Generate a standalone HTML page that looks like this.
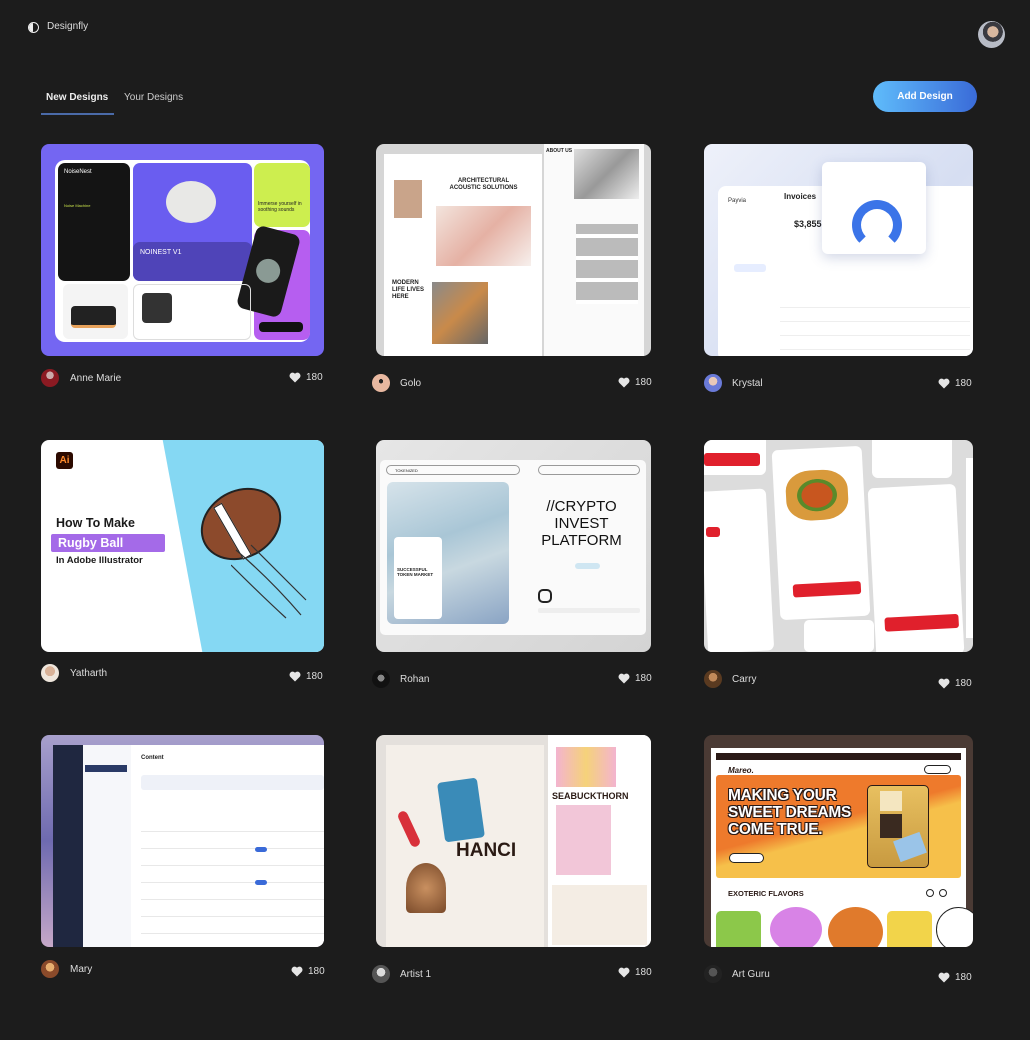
<!DOCTYPE html>
<html><head><meta charset="utf-8">
<style>
*{margin:0;padding:0;box-sizing:border-box}
body{width:1030px;height:1040px;background:#1c1c1c;font-family:"Liberation Sans",sans-serif;color:#e8e8e8;position:relative;overflow:hidden}
.a{position:absolute}
.card{position:absolute;border-radius:8px;overflow:hidden}
.av{position:absolute;width:18px;height:18px;border-radius:50%}
.nm{position:absolute;font-size:10px;color:#ddd}
.lk{position:absolute;font-size:10px;color:#ddd;display:flex;align-items:center;gap:5px}
.lk svg{width:12px;height:11px}
</style></head><body>
<!-- header -->
<div class="a" style="left:28px;top:22px;width:11px;height:11px;border-radius:50%;border:1.5px solid #eee;overflow:hidden"><div style="width:4px;height:11px;background:#eee"></div></div>
<div class="a" style="left:47px;top:21px;font-size:10px;color:#ddd">Designfly</div>
<div class="a" style="left:978px;top:21px;width:27px;height:27px;border-radius:50%;background:radial-gradient(circle at 55% 40%,#d9b8a0 0 25%,#3a3a40 26% 45%,#b8bcc6 46%)"></div>
<div class="a" style="left:46px;top:92px;font-size:10px;font-weight:bold;color:#eee">New Designs</div>
<div class="a" style="left:124px;top:92px;font-size:10px;color:#ccc">Your Designs</div>
<div class="a" style="left:41px;top:113px;width:73px;height:1.5px;background:#4a6aa8"></div>
<div class="a" style="left:873px;top:81px;width:104px;height:31px;border-radius:16px;background:linear-gradient(90deg,#5fbcfb,#3a6bd8);color:#fff;font-size:10px;font-weight:bold;display:flex;align-items:center;justify-content:center">Add Design</div>

<!-- card1 -->
<div class="card" style="left:41px;top:144px;width:283px;height:212px;background:#7466f2">
 <div class="a" style="left:14px;top:16px;width:255px;height:182px;background:#fff;border-radius:10px"></div>
 <div class="a" style="left:17px;top:19px;width:72px;height:118px;background:#141414;border-radius:7px;color:#fff;font-size:6px;padding:6px">NoiseNest<div style="color:#c7e04a;margin-top:28px;font-size:4px">Noise Machine</div></div>
 <div class="a" style="left:92px;top:19px;width:119px;height:118px;background:#6a5df0;border-radius:7px"><div class="a" style="left:33px;top:18px;width:50px;height:42px;border-radius:50%;background:#e8e8e6"></div><div class="a" style="left:0;top:79px;width:119px;height:39px;background:#4f44b8;border-radius:7px;color:#fff;font-size:7px;padding:7px">NOINEST V1</div></div>
 <div class="a" style="left:213px;top:19px;width:56px;height:64px;background:#cdee4f;border-radius:7px;font-size:5px;color:#222;padding:38px 4px 0">Immerse yourself in soothing sounds</div>
 <div class="a" style="left:213px;top:86px;width:56px;height:110px;background:#b65ef0;border-radius:7px"></div>
 <div class="a" style="left:205px;top:85px;width:45px;height:85px;background:#1a1a1a;border-radius:8px;transform:rotate(15deg)"><div class="a" style="left:10px;top:30px;width:24px;height:24px;border-radius:50%;background:#8a9a94"></div></div>
 <div class="a" style="left:22px;top:140px;width:65px;height:55px;background:#f4f4f4;border-radius:6px"><div class="a" style="left:8px;top:22px;width:45px;height:22px;background:#222;border-radius:4px;border-bottom:3px solid #e7a25b"></div></div>
 <div class="a" style="left:92px;top:140px;width:118px;height:56px;border:1px solid #ddd;border-radius:6px"><div class="a" style="left:8px;top:8px;width:30px;height:30px;background:#333;border-radius:4px"></div></div>
 <div class="a" style="left:218px;top:178px;width:44px;height:10px;background:#111;border-radius:4px"></div>
</div>
<div class="av" style="left:41px;top:369px;background:radial-gradient(circle at 50% 35%,#caa 0 25%,#8b1a22 26%)"></div>
<div class="nm" style="left:70px;top:373px">Anne Marie</div>
<div class="lk" style="left:289px;top:372px"><svg viewBox="0 0 24 22"><path d="M12 21 2.5 11.5A6 6 0 0 1 12 3.5a6 6 0 0 1 9.5 8Z" fill="#e5e5e5"/></svg>180</div>

<!-- card2 -->
<div class="card" style="left:376px;top:144px;width:275px;height:212px;background:#d6d6d6">
 <div class="a" style="left:8px;top:10px;width:158px;height:202px;background:#fff"></div>
 <div class="a" style="left:18px;top:36px;width:28px;height:38px;background:#c9a48a"></div>
 <div class="a" style="left:70px;top:34px;width:75px;font-size:6px;font-weight:bold;color:#222;text-align:center;line-height:7px">ARCHITECTURAL ACOUSTIC SOLUTIONS</div>
 <div class="a" style="left:60px;top:62px;width:95px;height:60px;background:linear-gradient(135deg,#f3e4dd,#e5b1a4,#f7f0ed)"></div>
 <div class="a" style="left:16px;top:136px;font-size:6px;font-weight:bold;color:#222;line-height:7px">MODERN<br>LIFE LIVES<br>HERE</div>
 <div class="a" style="left:56px;top:138px;width:56px;height:62px;background:linear-gradient(135deg,#8a8a8a,#c98a4a,#666)"></div>
 <div class="a" style="left:168px;top:0;width:100px;height:212px;background:#fafafa"></div>
 <div class="a" style="left:170px;top:4px;font-size:5px;font-weight:bold;color:#222">ABOUT US</div>
 <div class="a" style="left:198px;top:5px;width:65px;height:50px;background:linear-gradient(135deg,#ddd,#999,#eee)"></div>
 <div class="a" style="left:200px;top:80px;width:62px;height:80px;background:repeating-linear-gradient(0deg,#fff 0 4px,#bbb 4px 22px)"></div>
</div>
<div class="av" style="left:372px;top:374px;background:radial-gradient(circle at 50% 40%,#222 0 15%,#e8b8a0 16%)"></div>
<div class="nm" style="left:400px;top:378px">Golo</div>
<div class="lk" style="left:618px;top:377px"><svg viewBox="0 0 24 22"><path d="M12 21 2.5 11.5A6 6 0 0 1 12 3.5a6 6 0 0 1 9.5 8Z" fill="#e5e5e5"/></svg>180</div>

<!-- card3 -->
<div class="card" style="left:704px;top:144px;width:269px;height:212px;background:linear-gradient(135deg,#eef1fa,#d6def2 60%,#e8ecf6)">
 <div class="a" style="left:14px;top:42px;width:260px;height:175px;background:#fff;border-radius:8px"></div>
 <div class="a" style="left:24px;top:54px;font-size:6px;color:#333">Payvia</div>
 <div class="a" style="left:80px;top:48px;font-size:8px;font-weight:bold;color:#222">Invoices</div>
 <div class="a" style="left:30px;top:120px;width:32px;height:8px;background:#e6edff;border-radius:3px"></div>
 <div class="a" style="left:90px;top:75px;font-size:9px;font-weight:bold;color:#222">$3,855</div>
 <div class="a" style="left:76px;top:150px;width:190px;height:60px;background:repeating-linear-gradient(180deg,#fff 0 13px,#eee 13px 14px)"></div>
 <div class="a" style="left:118px;top:18px;width:104px;height:92px;background:#fff;border-radius:6px;box-shadow:0 4px 12px rgba(80,100,160,.25)"><div class="a" style="left:30px;top:38px;width:50px;height:50px;border-radius:50%;border:9px solid #3b74e8;border-bottom-color:transparent"></div></div>
</div>
<div class="av" style="left:704px;top:374px;background:radial-gradient(circle at 50% 40%,#e8c8b8 0 30%,#6a7ad8 31%)"></div>
<div class="nm" style="left:732px;top:378px">Krystal</div>
<div class="lk" style="left:938px;top:378px"><svg viewBox="0 0 24 22"><path d="M12 21 2.5 11.5A6 6 0 0 1 12 3.5a6 6 0 0 1 9.5 8Z" fill="#e5e5e5"/></svg>180</div>

<!-- card4 -->
<div class="card" style="left:41px;top:440px;width:283px;height:212px;background:#fff">
 <div class="a" style="left:0;top:0;width:283px;height:212px;background:#85d8f3;clip-path:polygon(43% 0,100% 0,100% 100%,57% 100%)"></div>
 <div class="a" style="left:15px;top:12px;width:17px;height:17px;background:#2c0a00;border-radius:3px;color:#ff8a2a;font-size:10px;font-weight:bold;text-align:center;line-height:17px">Ai</div>
 <div class="a" style="left:15px;top:76px;font-size:12.5px;font-weight:bold;color:#1a1a1a">How To Make</div>
 <div class="a" style="left:10px;top:94px;width:114px;height:18px;background:#a46ae8;border-radius:2px;color:#fff;font-size:12.5px;font-weight:bold;padding-left:7px;line-height:18px">Rugby Ball</div>
 <div class="a" style="left:15px;top:115px;font-size:9.5px;font-weight:bold;color:#1a1a1a">In Adobe Illustrator</div>
 <div class="a" style="left:158px;top:50px;width:84px;height:68px;background:#8c4a2c;border-radius:50%;border:2px solid #222;transform:rotate(-30deg)"><div class="a" style="left:24px;top:4px;width:10px;height:60px;background:#fff;border:1px solid #222"></div></div>
 <svg class="a" style="left:190px;top:100px" width="80" height="80"><path d="M5 10 Q40 40 70 75 M20 5 Q50 35 75 60 M0 25 Q30 55 55 78" stroke="#333" fill="none" stroke-width="1.2"/></svg>
</div>
<div class="av" style="left:41px;top:664px;background:radial-gradient(circle at 50% 40%,#d9b298 0 35%,#efe6dc 36%)"></div>
<div class="nm" style="left:70px;top:668px">Yatharth</div>
<div class="lk" style="left:289px;top:671px"><svg viewBox="0 0 24 22"><path d="M12 21 2.5 11.5A6 6 0 0 1 12 3.5a6 6 0 0 1 9.5 8Z" fill="#e5e5e5"/></svg>180</div>

<!-- card5 -->
<div class="card" style="left:376px;top:440px;width:275px;height:212px;background:linear-gradient(135deg,#e6e6e6,#d4d4d4)">
 <div class="a" style="left:4px;top:20px;width:266px;height:175px;background:#fafafa;border-radius:5px"></div>
 <div class="a" style="left:10px;top:25px;width:134px;height:10px;border:1px solid #999;border-radius:5px;font-size:4px;color:#222;padding:2px 8px">TOKENIZED</div>
 <div class="a" style="left:162px;top:25px;width:102px;height:10px;border:1px solid #999;border-radius:5px"></div>
 <div class="a" style="left:11px;top:42px;width:122px;height:142px;border-radius:6px;background:linear-gradient(160deg,#d6e3ea,#a9c6d6 40%,#c8d8e0 60%,#8aa4c4)"></div>
 <div class="a" style="left:18px;top:97px;width:48px;height:82px;background:#fff;border-radius:4px;font-size:4.5px;font-weight:bold;color:#222;padding:30px 3px 0">SUCCESSFUL TOKEN MARKET</div>
 <div class="a" style="left:148px;top:58px;width:115px;text-align:center;font-size:15px;line-height:17px;color:#111">//CRYPTO<br>INVEST<br>PLATFORM</div>
 <div class="a" style="left:199px;top:123px;width:25px;height:6px;background:#cfe6f2;border-radius:3px"></div>
 <div class="a" style="left:162px;top:149px;width:14px;height:14px;border:2px solid #222;border-radius:5px"></div>
 <div class="a" style="left:162px;top:168px;width:102px;height:5px;background:#eee;border-radius:2px"></div>
</div>
<div class="av" style="left:372px;top:670px;background:radial-gradient(circle at 50% 45%,#888 0 25%,#111 26%)"></div>
<div class="nm" style="left:400px;top:674px">Rohan</div>
<div class="lk" style="left:618px;top:673px"><svg viewBox="0 0 24 22"><path d="M12 21 2.5 11.5A6 6 0 0 1 12 3.5a6 6 0 0 1 9.5 8Z" fill="#e5e5e5"/></svg>180</div>

<!-- card6 -->
<div class="card" style="left:704px;top:440px;width:269px;height:212px;background:#dcdcdc">
 <div class="a" style="left:0;top:0;width:62px;height:35px;background:#fff;border-radius:0 0 6px 0"></div>
 <div class="a" style="left:0;top:13px;width:56px;height:13px;background:#e0202c;border-radius:3px"></div>
 <div class="a" style="left:0;top:50px;width:66px;height:162px;background:#fff;border-radius:0 6px 6px 0;transform:rotate(-3deg)"></div>
 <div class="a" style="left:2px;top:87px;width:14px;height:10px;background:#e0202c;border-radius:3px"></div>
 <div class="a" style="left:72px;top:8px;width:90px;height:170px;background:#fff;border-radius:6px;transform:rotate(-3deg)"><div class="a" style="left:12px;top:22px;width:62px;height:50px;border-radius:40%;background:radial-gradient(ellipse,#c8561f 0 35%,#5a8a2a 36% 45%,#d99a3c 46%)"></div><div class="a" style="left:14px;top:135px;width:68px;height:13px;background:#e0202c;border-radius:3px"></div></div>
 <div class="a" style="left:168px;top:46px;width:88px;height:170px;background:#fff;border-radius:6px;transform:rotate(-3deg)"><div class="a" style="left:10px;top:130px;width:74px;height:14px;background:#e0202c;border-radius:3px"></div></div>
 <div class="a" style="left:168px;top:0;width:80px;height:38px;background:#fff;border-radius:0 0 6px 6px"></div>
 <div class="a" style="left:100px;top:180px;width:70px;height:32px;background:#fff;border-radius:5px"></div>
 <div class="a" style="left:262px;top:18px;width:10px;height:180px;background:#fff"></div>
</div>
<div class="av" style="left:704px;top:670px;background:radial-gradient(circle at 50% 40%,#c28a5a 0 30%,#5a3a20 31%)"></div>
<div class="nm" style="left:732px;top:674px">Carry</div>
<div class="lk" style="left:938px;top:678px"><svg viewBox="0 0 24 22"><path d="M12 21 2.5 11.5A6 6 0 0 1 12 3.5a6 6 0 0 1 9.5 8Z" fill="#e5e5e5"/></svg>180</div>

<!-- card7 -->
<div class="card" style="left:41px;top:735px;width:283px;height:212px;background:linear-gradient(180deg,#a8a0cc,#6e6ab0 50%,#c6a8c8)">
 <div class="a" style="left:12px;top:10px;width:30px;height:205px;background:#1f2740"></div>
 <div class="a" style="left:42px;top:10px;width:48px;height:205px;background:#f6f7fa"></div>
 <div class="a" style="left:44px;top:30px;width:42px;height:7px;background:#2a3a66"></div>
 <div class="a" style="left:90px;top:10px;width:200px;height:205px;background:#fff"></div>
 <div class="a" style="left:100px;top:20px;font-size:6px;font-weight:bold;color:#222">Content</div>
 <div class="a" style="left:100px;top:40px;width:183px;height:15px;background:#eef1f8;border-radius:3px"></div>
 <div class="a" style="left:100px;top:80px;width:183px;height:130px;background:repeating-linear-gradient(180deg,#fff 0 16px,#e8e8e8 16px 17px)"></div>
 <div class="a" style="left:214px;top:112px;width:12px;height:5px;background:#3a6ad8;border-radius:3px"></div>
 <div class="a" style="left:214px;top:145px;width:12px;height:5px;background:#3a6ad8;border-radius:3px"></div>
</div>
<div class="av" style="left:41px;top:960px;background:radial-gradient(circle at 50% 40%,#e8b070 0 30%,#8a4a2a 31%)"></div>
<div class="nm" style="left:70px;top:964px">Mary</div>
<div class="lk" style="left:291px;top:966px"><svg viewBox="0 0 24 22"><path d="M12 21 2.5 11.5A6 6 0 0 1 12 3.5a6 6 0 0 1 9.5 8Z" fill="#e5e5e5"/></svg>180</div>

<!-- card8 -->
<div class="card" style="left:376px;top:735px;width:275px;height:212px;background:#e4e0dc">
 <div class="a" style="left:10px;top:10px;width:158px;height:202px;background:#f4efe9"></div>
 <div class="a" style="left:65px;top:45px;width:40px;height:60px;background:#3a8bb8;border-radius:4px;transform:rotate(-8deg)"></div>
 <div class="a" style="left:28px;top:75px;width:10px;height:38px;background:#d8303a;border-radius:5px;transform:rotate(-25deg)"></div>
 <div class="a" style="left:80px;top:105px;width:35px;height:22px;font-size:19px;font-weight:bold;color:#2a1a14">HANCI</div>
 <div class="a" style="left:30px;top:128px;width:40px;height:50px;background:radial-gradient(circle,#c99060,#7a4a2a);border-radius:50% 50% 10% 10%"></div>
 <div class="a" style="left:172px;top:0;width:103px;height:212px;background:#fff"></div>
 <div class="a" style="left:180px;top:12px;width:60px;height:40px;background:linear-gradient(90deg,#f3b4cf,#f5d27a,#f3b4cf)"></div>
 <div class="a" style="left:176px;top:56px;font-size:9px;font-weight:bold;color:#2a1a14">SEABUCKTHORN</div>
 <div class="a" style="left:180px;top:70px;width:55px;height:70px;background:#f2c6d8"></div>
 <div class="a" style="left:176px;top:150px;width:95px;height:60px;background:#f4ede4"></div>
</div>
<div class="av" style="left:372px;top:965px;background:radial-gradient(circle at 50% 40%,#ddd 0 30%,#555 31%)"></div>
<div class="nm" style="left:400px;top:969px">Artist 1</div>
<div class="lk" style="left:618px;top:967px"><svg viewBox="0 0 24 22"><path d="M12 21 2.5 11.5A6 6 0 0 1 12 3.5a6 6 0 0 1 9.5 8Z" fill="#e5e5e5"/></svg>180</div>

<!-- card9 -->
<div class="card" style="left:704px;top:735px;width:269px;height:212px;background:#4a3a34">
 <div class="a" style="left:7px;top:13px;width:255px;height:199px;background:#fff"></div>
 <div class="a" style="left:12px;top:18px;width:245px;height:7px;background:#2a1a16"></div>
 <div class="a" style="left:24px;top:31px;font-size:8px;font-weight:bold;font-style:italic;color:#2a1a16">Mareo.</div>
 <div class="a" style="left:220px;top:30px;width:27px;height:9px;border:1px solid #222;border-radius:5px"></div>
 <div class="a" style="left:12px;top:40px;width:245px;height:103px;background:linear-gradient(165deg,#ee7a2c 0 45%,#f6c04a 55%);border-radius:3px"></div>
 <div class="a" style="left:24px;top:52px;font-size:15.5px;line-height:17px;font-weight:bold;color:#fff;letter-spacing:-.3px;text-shadow:1px 1px 0 #2a1a16,-1px -1px 0 #2a1a16,1px -1px 0 #2a1a16,-1px 1px 0 #2a1a16">MAKING YOUR<br>SWEET DREAMS<br>COME TRUE.</div>
 <div class="a" style="left:25px;top:118px;width:35px;height:10px;background:#fff;border:1px solid #222;border-radius:5px"></div>
 <div class="a" style="left:163px;top:50px;width:62px;height:83px;background:linear-gradient(180deg,#e8c060,#c89a40);border:1px solid #2a1a16;border-radius:5px"><div class="a" style="left:12px;top:5px;width:22px;height:20px;background:#f4e6c0"></div><div class="a" style="left:12px;top:28px;width:22px;height:24px;background:#3a2a20"></div><div class="a" style="left:28px;top:50px;width:28px;height:22px;background:#9ac4e8;transform:rotate(-20deg)"></div></div>
 <div class="a" style="left:24px;top:154px;font-size:7.5px;font-weight:bold;color:#2a1a16">EXOTERIC FLAVORS</div>
 <div class="a" style="left:222px;top:154px;width:8px;height:8px;border:1px solid #222;border-radius:50%"></div>
 <div class="a" style="left:235px;top:154px;width:8px;height:8px;border:1px solid #222;border-radius:50%"></div>
 <div class="a" style="left:12px;top:176px;width:45px;height:40px;background:#8cc84a;border-radius:5px"></div>
 <div class="a" style="left:66px;top:172px;width:52px;height:45px;background:#d883e6;border-radius:50%"></div>
 <div class="a" style="left:124px;top:172px;width:55px;height:50px;background:#e07a2c;border-radius:50%"></div>
 <div class="a" style="left:183px;top:176px;width:45px;height:40px;background:#f2d44a;border-radius:5px"></div>
 <div class="a" style="left:232px;top:172px;width:45px;height:45px;background:#fff;border:1px solid #222;border-radius:50%"></div>
</div>
<div class="av" style="left:704px;top:965px;background:radial-gradient(circle at 50% 40%,#555 0 30%,#222 31%)"></div>
<div class="nm" style="left:732px;top:969px">Art Guru</div>
<div class="lk" style="left:938px;top:972px"><svg viewBox="0 0 24 22"><path d="M12 21 2.5 11.5A6 6 0 0 1 12 3.5a6 6 0 0 1 9.5 8Z" fill="#e5e5e5"/></svg>180</div>
</body></html>
